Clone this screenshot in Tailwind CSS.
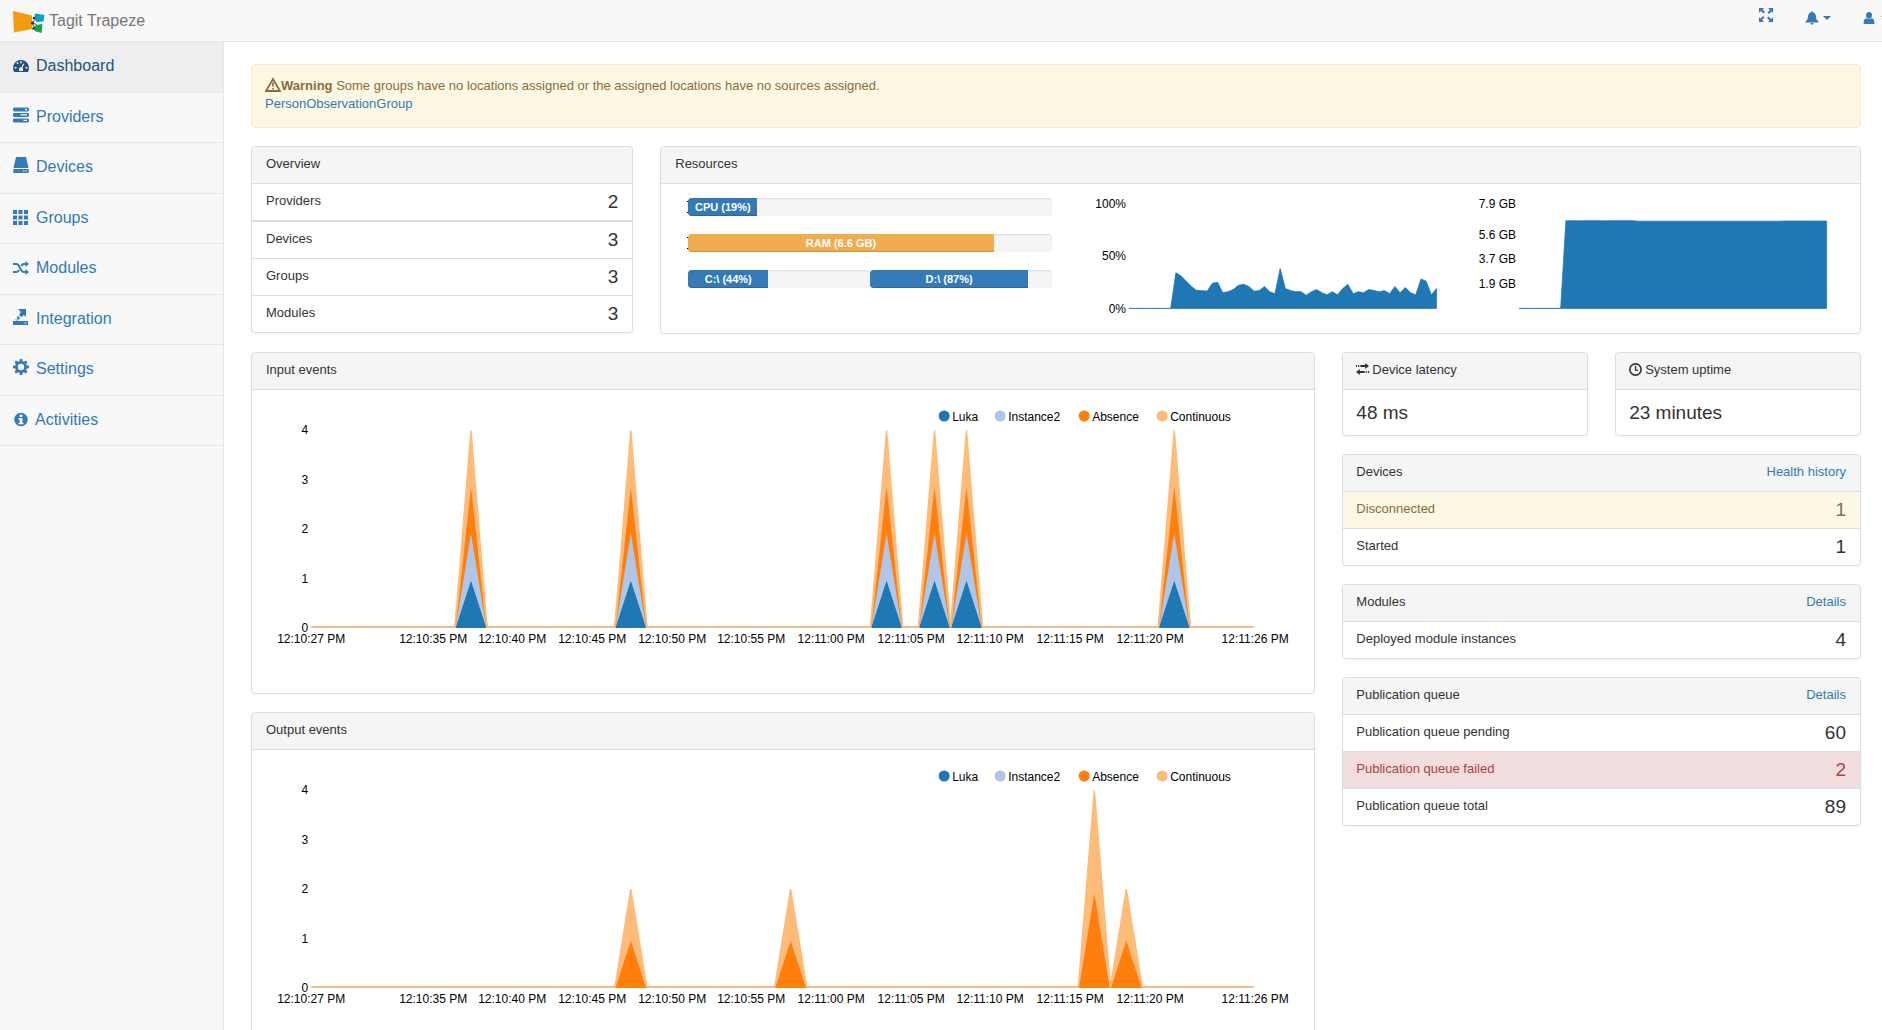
<!doctype html>
<html lang="en">
  <head>
    <title>Tagit Trapeze</title>
    <meta charset="UTF-8" />
    <meta name="viewport" content="width=device-width, initial-scale=1.0" />
    <script src="https://cdn.jsdelivr.net/npm/@tailwindcss/browser@4"></script>
  </head>

  <body
    class="flex h-screen flex-col overflow-hidden bg-white font-['Liberation_Sans',Arial,sans-serif] text-[13px] leading-[18px] text-[#333]"
  >
    <header
      class="flex h-[42px] shrink-0 items-center justify-between border-b border-[#e7e7e7] bg-[#f8f8f8] pl-3"
    >
      <a href="#" class="flex items-center gap-1 text-base leading-6 text-[#777]">
        <svg class="mt-1 h-6 w-[33px]" viewBox="0 0 33 24">
          <path d="M1 0 20 4.500V18L2 21.500Z" fill="#f39c12" />
          <path d="M23 2.500 32.500 4 31.500 10.500 24.500 11 22.500 7Z" fill="#05a3c8" />
          <path d="M24 14 30.500 13 29.500 22 22.500 20 22.500 16Z" fill="#08a63f" />
          <path
            d="M20 12 23.500 8M20 12 24.500 13.500M20 12 23 17.500"
            stroke="#444"
            stroke-width="1"
          />
          <circle cx="20.500" cy="12" r="1.600" fill="#333" />
          <circle cx="22" cy="7" r="1.300" fill="#333" />
          <circle cx="21.500" cy="17.500" r="1.300" fill="#333" />
        </svg>
        Tagit Trapeze
      </a>
      <div class="-mr-[7px] flex items-center gap-8 pb-[11px] text-[#337ab7]">
        <button type="button" aria-label="Full screen">
          <svg class="size-[14px]" viewBox="0 0 14 14" fill="currentColor">
            <path
              d="M0 0h5L3.500 1.500 6 4 4.500 5.500 2 3 .500 4.500H0ZM14 0v5L12.500 3.500 10 6 8.500 4.500 11 2 9.500 .500V0ZM0 14V9l1.500 1.500L4 8l1.500 1.500L3 12l1.500 1.500v.500ZM14 14H9l1.500-1.500L8 10l1.500-1.500L12 11l1.500-1.500H14Z"
            />
          </svg>
        </button>
        <button type="button" aria-label="Notifications" class="flex items-center gap-1 pt-1.5">
          <svg class="size-[14px]" viewBox="0 0 14 14" fill="currentColor">
            <path
              d="M7 .500c.800 0 1.200.500 1.200 1.100C10 2.200 10.800 3.500 11 5.500c.200 2.500.700 3.500 2.500 5V11.500H.500V10.500C2.300 9 2.800 8 3 5.500 3.200 3.500 4 2.200 5.800 1.600 5.800 1 6.200.500 7 .500ZM5.500 12h3c0 2-3 2-3 0Z"
            />
          </svg>
          <svg class="h-1 w-2" viewBox="0 0 8 4" fill="currentColor"><path d="M0 0h8L4 4Z" /></svg>
        </button>
        <button type="button" aria-label="Account" class="flex items-center gap-1.5 pt-1.5">
          <svg class="h-[14px] w-3" viewBox="0 0 12 14" fill="currentColor">
            <path
              d="M6 1c1.900 0 3 1.300 3 3.200C9 6 8 7.700 6 7.700S3 6 3 4.200C3 2.300 4.100 1 6 1ZM3.500 7.200c1.500 1.500 3.500 1.500 5 0C10.500 7.800 11.300 9 11.300 11v2H.700V11c0-2 .800-3.200 2.800-3.800Z"
            />
          </svg>
          <svg class="h-1 w-2" viewBox="0 0 8 4" fill="currentColor"><path d="M0 0h8L4 4Z" /></svg>
        </button>
      </div>
    </header>

    <div class="flex min-h-0 flex-1">
      <nav class="w-56 shrink-0 border-r border-[#e7e7e7] bg-[#f8f8f8] text-base leading-6 text-[#337ab7]">
        <ul class="grid h-[404px] auto-rows-fr">
          <li class="border-b border-[#e7e7e7]">
            <a href="#" class="flex h-full items-center gap-[7px] bg-[#eee] px-[13px] pb-px text-[#23527c]">
              <svg class="size-4" viewBox="0 0 16 16" fill="currentColor">
                <path
                  fill-rule="evenodd"
                  d="M8 2a8 8 0 0 1 6.900 12H1.100A8 8 0 0 1 8 2ZM7.200 3.300v1.900h1.600V3.300ZM3.300 5l1.300 1.300 1.200-1.100L4.500 3.900ZM1.500 9v1.600h2V9ZM12.500 9v1.600h2V9ZM10.200 5.500 8.300 9.200C6.800 9 6 10 6 11.200V13h4v-1.800c0-.700-.200-1.200-.600-1.500L11.300 6Z"
                />
              </svg>
              Dashboard
            </a>
          </li>
          <li class="border-b border-[#e7e7e7]">
            <a href="#" class="flex h-full items-center gap-[7px] px-[13px] pb-px">
              <svg class="mb-1 size-4" viewBox="0 0 16 16" fill="currentColor">
                <path
                  fill-rule="evenodd"
                  d="M1 .500h14l1 1v2l-1 1H1l-1-1v-2ZM12 1.700v1.500h2V1.700ZM1 6h14l1 1v2l-1 1H1L0 9V7ZM7.500 7.200v1.300H14V7.200ZM1 11.500h14l1 1v2l-1 1H1l-1-1v-2ZM10.500 12.700v1.300H14v-1.300Z"
                />
              </svg>
              Providers
            </a>
          </li>
          <li class="border-b border-[#e7e7e7]">
            <a href="#" class="flex h-full items-center gap-[7px] px-[13px] pb-px">
              <svg class="mb-1 size-4" viewBox="0 0 16 16" fill="currentColor">
                <path
                  fill-rule="evenodd"
                  d="M3 0h10l2.500 11H.500ZM.300 12h15.400v3.500l-.500.500H.800l-.500-.500ZM10 13.500v1h1.500v-1ZM12.500 13.500v1H14v-1Z"
                />
              </svg>
              Devices
            </a>
          </li>
          <li class="border-b border-[#e7e7e7]">
            <a href="#" class="flex h-full items-center gap-[7px] px-[13px] pb-px">
              <svg class="size-4" viewBox="0 0 16 16" fill="currentColor">
                <path
                  d="M0 0h4v4H0ZM5.500 0h4v4h-4ZM11 0h4v4h-4ZM0 5.500h4v4H0ZM5.500 5.500h4v4h-4ZM11 5.500h4v4h-4ZM0 11h4v4H0ZM5.500 11h4v4h-4ZM11 11h4v4h-4Z"
                />
              </svg>
              Groups
            </a>
          </li>
          <li class="border-b border-[#e7e7e7]">
            <a href="#" class="flex h-full items-center gap-[7px] px-[13px] pb-px">
              <svg class="size-4" viewBox="0 0 16 16" fill="currentColor">
                <path d="M12.500 1 16 4l-3.500 3ZM12.500 9 16 12l-3.500 3Z" />
                <path
                  d="M0 4h3.500c3.500 0 3.500 8 7.500 8h2.500M0 12h3.500c1.200 0 2-.900 2.700-2M8.200 6c.700-1.200 1.500-2 2.800-2h2.500"
                  fill="none"
                  stroke="currentColor"
                  stroke-width="2"
                />
              </svg>
              Modules
            </a>
          </li>
          <li class="border-b border-[#e7e7e7]">
            <a href="#" class="flex h-full items-center gap-[7px] px-[13px] pb-px">
              <svg class="mb-1 size-4" viewBox="0 0 16 16" fill="currentColor">
                <path
                  fill-rule="evenodd"
                  d="M5 0h8v8L10.800 6 8.500 8.200 6 6 7.700 3ZM5 7l2.200 2.200L5.500 10.500 3.500 8.700ZM2 10.500h4L4.500 11.500H3ZM0 12h15v4H0ZM11.500 13.500v1H13.500v-1Z"
                />
              </svg>
              Integration
            </a>
          </li>
          <li class="border-b border-[#e7e7e7]">
            <a href="#" class="flex h-full items-center gap-[7px] px-[13px] pb-px">
              <svg class="mb-1 size-4" viewBox="0 0 16 16" fill="currentColor">
                <path
                  fill-rule="evenodd"
                  d="M6.800 0h2.400l.4 2.300 1.300.500L12.800 1.500l1.700 1.700-1.300 1.900.500 1.300 2.300.400v2.400l-2.300.400-.500 1.300 1.300 1.900-1.700 1.700-1.900-1.300-1.300.500-.400 2.300H6.800l-.400-2.300-1.300-.500-1.900 1.300-1.700-1.700 1.300-1.900-.500-1.300L0 9.200V6.800l2.300-.400.500-1.300L1.500 3.200l1.700-1.700 1.900 1.300 1.300-.500ZM8 4.800a3.200 3.200 0 1 0 0 6.400 3.200 3.200 0 0 0 0-6.400Z"
                />
              </svg>
              Settings
            </a>
          </li>
          <li class="border-b border-[#e7e7e7]">
            <a href="#" class="flex h-full items-center gap-[7px] px-[13px] pb-px">
              <svg class="size-[15px]" viewBox="0 0 16 16" fill="currentColor">
                <path
                  fill-rule="evenodd"
                  d="M8.500 .800a7.200 7.200 0 1 1 0 14.400A7.200 7.200 0 0 1 8.500 .800ZM7 2.800v2.400h3V2.800ZM5.800 6.500v1.500h1.200v3.500H5.800V13h5.400v-1.500H10v-5Z"
                />
              </svg>
              Activities
            </a>
          </li>
        </ul>
      </nav>

      <main
        class="flex min-w-0 flex-1 flex-col gap-[18px] overflow-y-auto pt-[22px] pr-[21px] pb-[18px] pl-[27px] [scrollbar-width:none]"
      >
        <div
          class="h-16 shrink-0 rounded border border-[#faebcc] bg-[#fcf8e3] px-[13px] py-3 text-[#8a6d3b]"
          role="alert"
        >
          <p>
            <svg class="-mt-1 inline size-4" viewBox="0 0 16 16">
              <path d="M8 2 15 14H1Z" fill="none" stroke="#8a6d3b" stroke-width="1.800" />
              <path d="M7 5.500h2L8.600 10H7.400ZM7.200 11h1.600v1.500H7.200Z" fill="#8a6d3b" />
            </svg><strong>Warning</strong>
            Some groups have no locations assigned or the assigned locations have no sources
            assigned.
          </p>
          <a href="#" class="text-[#337ab7]">PersonObservationGroup</a>
        </div>

        <div class="grid shrink-0 grid-cols-12 items-start gap-x-[27px]">
          <section class="col-span-3 rounded border border-[#ddd] shadow-xs">
            <h2 class="h-9 rounded-t bg-[#f5f5f5] px-3.5 py-2">Overview</h2>
            <ul>
              <li class="flex h-[38px] justify-between border-t border-b border-[#ddd] px-3.5 py-2">
                Providers <span class="text-[19px] leading-5">2</span>
              </li>
              <li class="flex h-[37px] justify-between border-t border-[#ddd] px-3.5 py-2">
                Devices <span class="text-[19px] leading-5">3</span>
              </li>
              <li class="flex h-[37px] justify-between border-t border-[#ddd] px-3.5 py-2">
                Groups <span class="text-[19px] leading-5">3</span>
              </li>
              <li class="flex h-[37px] justify-between border-t border-[#ddd] px-3.5 py-2">
                Modules <span class="text-[19px] leading-5">3</span>
              </li>
            </ul>
          </section>

          <section class="col-span-9 rounded border border-[#ddd] shadow-xs">
            <h2 class="h-[37px] rounded-t border-b border-[#ddd] bg-[#f5f5f5] px-3.5 py-2">
              Resources
            </h2>
            <div class="grid grid-cols-3 gap-x-[27px] px-[27px]">
              <div
                class="flex flex-col gap-[18px] pt-3.5 text-center text-[11px] font-bold text-white"
              >
                <div
                  class="relative h-[18px] rounded bg-[#f5f5f5] shadow-[inset_0_1px_2px_rgba(0,0,0,0.1)] before:absolute before:top-[3px] before:-left-px before:h-3 before:w-1 before:border-y before:border-black"
                >
                  <div
                    class="relative h-full overflow-hidden rounded-l bg-[#337ab7] whitespace-nowrap shadow-[inset_0_-1px_0_rgba(0,0,0,0.15)]"
                    style="width: 19%"
                  >
                    CPU (19%)
                  </div>
                </div>
                <div
                  class="relative h-[18px] rounded bg-[#f5f5f5] shadow-[inset_0_1px_2px_rgba(0,0,0,0.1)] before:absolute before:top-[3px] before:-left-px before:h-3 before:w-1 before:border-y before:border-black"
                >
                  <div
                    class="relative h-full overflow-hidden rounded-l bg-[#f0ad4e] whitespace-nowrap shadow-[inset_0_-1px_0_rgba(0,0,0,0.15)]"
                    style="width: 84%"
                  >
                    RAM (6.6 GB)
                  </div>
                </div>
                <div class="flex">
                  <div
                    class="h-[18px] flex-1 rounded bg-[#f5f5f5] shadow-[inset_0_1px_2px_rgba(0,0,0,0.1)]"
                  >
                    <div
                      class="h-full overflow-hidden rounded-l bg-[#337ab7] whitespace-nowrap shadow-[inset_0_-1px_0_rgba(0,0,0,0.15)]"
                      style="width: 44%"
                    >
                      C:\ (44%)
                    </div>
                  </div>
                  <div
                    class="h-[18px] flex-1 rounded bg-[#f5f5f5] shadow-[inset_0_1px_2px_rgba(0,0,0,0.1)]"
                  >
                    <div
                      class="h-full overflow-hidden rounded-l bg-[#337ab7] whitespace-nowrap shadow-[inset_0_-1px_0_rgba(0,0,0,0.15)]"
                      style="width: 87%"
                    >
                      D:\ (87%)
                    </div>
                  </div>
                </div>
              </div>
              <svg id="cpuChart" class="h-[149px] w-full text-xs" viewBox="0 0 364 149"></svg>
              <svg id="ramChart" class="h-[149px] w-full text-xs" viewBox="0 0 364 149"></svg>
            </div>
          </section>
        </div>

        <div class="grid shrink-0 grid-cols-12 items-start gap-x-[27px]">
          <div class="col-span-8 flex flex-col gap-[18px]">
            <section class="rounded border border-[#ddd] shadow-xs">
              <h2 class="h-[37px] rounded-t border-b border-[#ddd] bg-[#f5f5f5] px-3.5 py-2">
                Input events
              </h2>
              <svg id="inputChart" class="h-[303px] w-full text-xs" viewBox="0 0 1062 303"></svg>
            </section>
            <section class="rounded border border-[#ddd] shadow-xs">
              <h2 class="h-[37px] rounded-t border-b border-[#ddd] bg-[#f5f5f5] px-3.5 py-2">
                Output events
              </h2>
              <svg id="outputChart" class="h-[303px] w-full text-xs" viewBox="0 0 1062 303"></svg>
            </section>
          </div>

          <div class="col-span-4 flex flex-col gap-[18px]">
            <div class="grid grid-cols-2 gap-x-[27px]">
              <section class="h-[84px] rounded border border-[#ddd] shadow-xs">
                <h2
                  class="flex h-[37px] gap-[3px] rounded-t border-b border-[#ddd] bg-[#f5f5f5] px-[13px] py-2"
                >
                  <svg class="mt-0.5 size-[13px]" viewBox="0 0 12 12" fill="currentColor">
                    <path
                      d="M8.500 0 12 2.800 8.500 5.600V3.700H4V1.900h4.500ZM0 1.900h1v1.800H0ZM2 1.900h1v1.800H2ZM3.500 5.500 0 8.300l3.500 2.800V9.200H8V7.400H3.500ZM9 7.400h1v1.800H9ZM11 7.400h1v1.800h-1Z"
                    />
                  </svg>
                  Device latency
                </h2>
                <p class="px-[13px] py-[13px] text-[19px] leading-5">48 ms</p>
              </section>
              <section class="h-[84px] rounded border border-[#ddd] shadow-xs">
                <h2
                  class="flex h-[37px] gap-[3px] rounded-t border-b border-[#ddd] bg-[#f5f5f5] px-[13px] py-2"
                >
                  <svg class="mt-0.5 size-[13px]" viewBox="0 0 12 12" fill="none" stroke="currentColor">
                    <circle cx="6" cy="6" r="5.200" stroke-width="1.500" />
                    <path d="M6 2.500V6.500H8.500" stroke-width="1.200" />
                  </svg>
                  System uptime
                </h2>
                <p class="px-[13px] py-[13px] text-[19px] leading-5">23 minutes</p>
              </section>
            </div>

            <section class="rounded border border-[#ddd] shadow-xs">
              <h2 class="flex h-9 justify-between rounded-t bg-[#f5f5f5] py-2 pr-3.5 pl-[13px]">
                Devices <a href="#" class="text-[#337ab7]">Health history</a>
              </h2>
              <ul>
                <li
                  class="flex h-[37px] justify-between border-t border-[#ddd] bg-[#fcf8e3] py-2 pr-3.5 pl-[13px] text-[#8a6d3b]"
                >
                  Disconnected <span class="text-[19px] leading-5">1</span>
                </li>
                <li class="flex h-[37px] justify-between border-t border-[#ddd] py-2 pr-3.5 pl-[13px]">
                  Started <span class="text-[19px] leading-5">1</span>
                </li>
              </ul>
            </section>

            <section class="rounded border border-[#ddd] shadow-xs">
              <h2 class="flex h-9 justify-between rounded-t bg-[#f5f5f5] py-2 pr-3.5 pl-[13px]">
                Modules <a href="#" class="text-[#337ab7]">Details</a>
              </h2>
              <ul>
                <li class="flex h-[37px] justify-between border-t border-[#ddd] py-2 pr-3.5 pl-[13px]">
                  Deployed module instances <span class="text-[19px] leading-5">4</span>
                </li>
              </ul>
            </section>

            <section class="rounded border border-[#ddd] shadow-xs">
              <h2 class="flex h-9 justify-between rounded-t bg-[#f5f5f5] py-2 pr-3.5 pl-[13px]">
                Publication queue <a href="#" class="text-[#337ab7]">Details</a>
              </h2>
              <ul>
                <li class="flex h-[37px] justify-between border-t border-[#ddd] py-2 pr-3.5 pl-[13px]">
                  Publication queue pending <span class="text-[19px] leading-5">60</span>
                </li>
                <li
                  class="flex h-[37px] justify-between border-t border-[#ddd] bg-[#f2dede] py-2 pr-3.5 pl-[13px] text-[#a94442]"
                >
                  Publication queue failed <span class="text-[19px] leading-5">2</span>
                </li>
                <li class="flex h-[37px] justify-between border-t border-[#ddd] py-2 pr-3.5 pl-[13px]">
                  Publication queue total <span class="text-[19px] leading-5">89</span>
                </li>
              </ul>
            </section>
          </div>
        </div>
      </main>
    </div>

    <script>
      const label = (x, y, text, anchor) =>
        `<text x="${x}" y="${y}" dy="4" fill="#000" text-anchor="${anchor}">${text}</text>`;

      // small area chart, one value per second
      function drawUsage(id, values, scale, labels) {
        const base = 124.5;
        const step = 308 / 59;
        const line = values.map((v, i) => `${50 + i * step},${base - v * scale}`);
        document.getElementById(id).innerHTML =
          labels.map(([y, text]) => label(47, y, text, "end")).join("") +
          `<polygon points="50,${base} ${line.join(" ")} 358,${base}" fill="#1f77b4" stroke="#1f77b4" stroke-opacity="0.75"/>`;
      }

      const idle = Array(9).fill(0);
      drawUsage(
        "cpuChart",
        [
          ...idle, 34, 31, 26, 21, 17, 17, 16.5, 24, 25, 15, 16, 18, 22, 23, 21, 16.5, 17, 21, 16,
          14, 38, 19, 17, 16, 16, 12.5, 16, 18, 15, 13, 16, 13, 19, 23, 14, 16, 15, 18, 17, 16, 17,
          14, 21, 15, 20, 15, 13, 28, 26, 13, 19,
        ],
        1.05,
        [[20, "100%"], [72, "50%"], [125, "0%"]],
      );
      drawUsage(
        "ramChart",
        [...idle, ...Array(14).fill(6.6), ...Array(28).fill(6.57), ...Array(9).fill(6.58)],
        13.3,
        [[20, "7.9 GB"], [51, "5.6 GB"], [75, "3.7 GB"], [100, "1.9 GB"]],
      );

      const series = [
        ["Luka", "#1f77b4", 692],
        ["Instance2", "#aec7e8", 748],
        ["Absence", "#ff7f0e", 832],
        ["Continuous", "#ffbb78", 910],
      ];
      const ticks = [
        [59, "12:10:27 PM"], [181, "12:10:35 PM"], [260, "12:10:40 PM"], [340, "12:10:45 PM"],
        [420, "12:10:50 PM"], [499, "12:10:55 PM"], [579, "12:11:00 PM"], [659, "12:11:05 PM"],
        [738, "12:11:10 PM"], [818, "12:11:15 PM"], [898, "12:11:20 PM"], [1003, "12:11:26 PM"],
      ];

      // stacked area chart; peaks maps a second to the counts of each series
      function drawEvents(id, peaks) {
        const base = 237.5;
        const unit = 49.25;
        const x = (s) => 59 + (s * 943) / 59;
        const total = Array(60).fill(0);
        let areas = "";
        series.forEach(([, color], n) => {
          const lower = total.map((v, s) => `${x(s)},${base - v * unit}`).reverse();
          for (const s in peaks) total[s] += peaks[s][n];
          const upper = total.map((v, s) => `${x(s)},${base - v * unit}`);
          areas += `<polygon points="${upper.join(" ")} ${lower.join(" ")}" fill="${color}" stroke="${color}" stroke-width="1.5"/>`;
        });
        document.getElementById(id).innerHTML =
          `<clipPath id="${id}Clip"><rect x="59" y="40" width="943" height="198"/></clipPath>` +
          [0, 1, 2, 3, 4].map((v) => label(56, 238 - v * 49.5, v, "end")).join("") +
          `<g clip-path="url(#${id}Clip)">${areas}</g>` +
          ticks.map(([tx, text]) => label(tx, 249, text, "middle")).join("") +
          series
            .map(
              ([name, color, cx]) =>
                `<circle cx="${cx}" cy="26" r="5.5" fill="${color}"/>` +
                label(cx + 8, 27, name, "start"),
            )
            .join("");
      }

      const all = [1, 1, 1, 1];
      drawEvents("inputChart", { 10: all, 20: all, 36: all, 39: all, 41: all, 54: all });
      drawEvents("outputChart", {
        20: [0, 0, 1, 1],
        30: [0, 0, 1, 1],
        49: [0, 0, 2, 2],
        51: [0, 0, 1, 1],
      });
    </script>
  </body>
</html>
